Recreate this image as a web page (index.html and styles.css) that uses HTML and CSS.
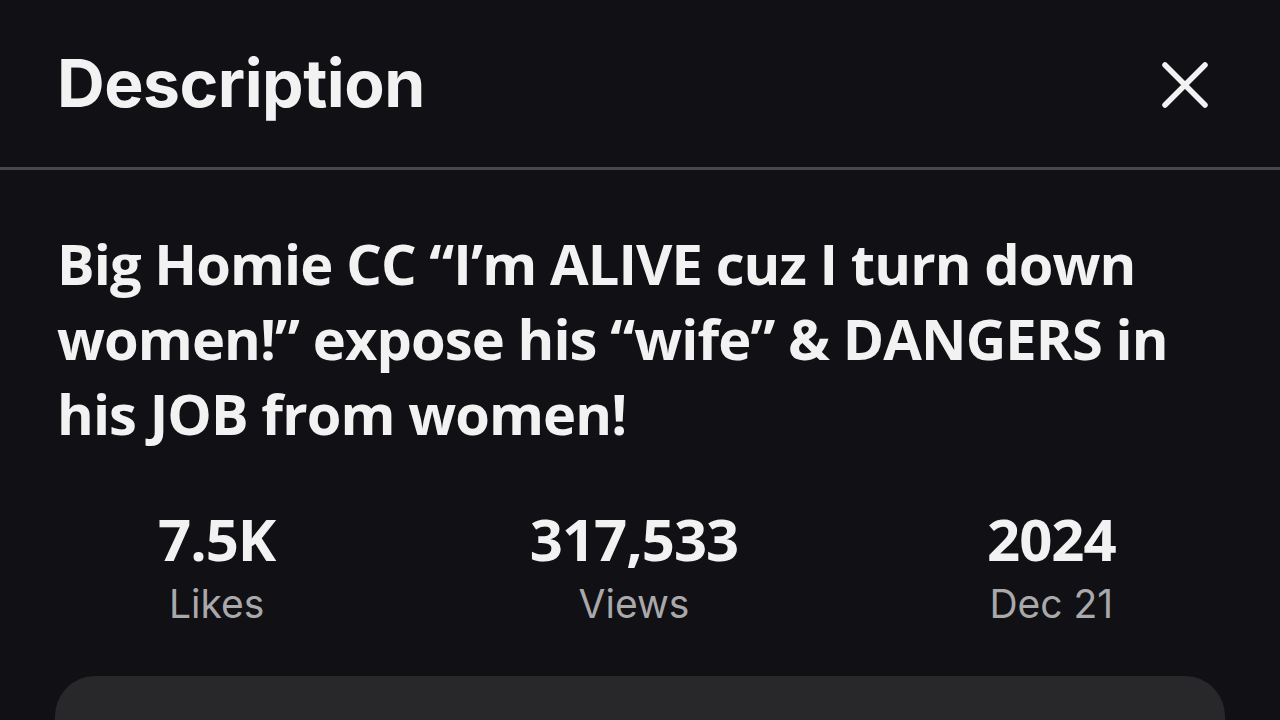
FILE: index.html
```html
<!DOCTYPE html>
<html lang="en">
<head>
    <meta charset="UTF-8">
    <meta name="viewport" content="width=device-width, initial-scale=1.0">
    <title>Description</title>
    <link rel="stylesheet" href="styles.css">
</head>
<body>

<header class="sheet-header">
    <h1>Description</h1>
    <button class="close-button" aria-label="Close">
        <svg width="50" height="50" viewBox="0 0 50 50">
            <path d="M5 5 L45 45 M45 5 L5 45" stroke="#f2f2f2" stroke-width="5.5" stroke-linecap="round" fill="none"/>
        </svg>
    </button>
</header>

<div class="content">
    <p class="video-title">Big Homie CC “I’m ALIVE cuz I turn down women!” expose his “wife” &amp; DANGERS in his JOB from women!</p>

    <div class="stats">
        <div class="stat">
            <span class="stat-value">7.5K</span>
            <span class="stat-label">Likes</span>
        </div>
        <div class="stat">
            <span class="stat-value">317,533</span>
            <span class="stat-label">Views</span>
        </div>
        <div class="stat">
            <span class="stat-value">2024</span>
            <span class="stat-label">Dec 21</span>
        </div>
    </div>

    <!-- Cartão seguinte, cortado pela borda da tela -->
    <div class="info-card"></div>
</div>

</body>
</html>
```

FILE: styles.css
```css
body {
    font-family: Inter, "Noto Sans", sans-serif;
    background-color: #111014;
    color: #f2f2f2;
    margin: 0;
    padding: 0;
    height: 720px;
    overflow: hidden;
}

.sheet-header {
    display: flex;
    justify-content: space-between;
    align-items: center;
    height: 170px;
    padding: 0 56px 0 57px;
    border-bottom: 3px solid #48474a;
    box-sizing: border-box;
}

.sheet-header h1 {
    font-size: 66px;
    font-weight: 700;
    margin: 0 0 2px;
    letter-spacing: -0.5px;
}

.close-button {
    background: none;
    border: none;
    padding: 0;
    margin: 3px 14px 0 0;
    cursor: pointer;
    display: flex;
}

.content {
    padding: 0 56px;
}

.video-title {
    font-family: "Open Sans", sans-serif;
    font-size: 56px;
    font-weight: 700;
    line-height: 75px;
    letter-spacing: -0.9px;
    margin: 56px 0 0;
    padding-left: 1px;
}

.stats {
    display: grid;
    grid-template-columns: repeat(3, 1fr);
    margin: 48px -36px 0 -48px;
}

.stat {
    display: flex;
    flex-direction: column;
    align-items: center;
}

.stat-value {
    font-family: "Open Sans", sans-serif;
    font-size: 58px;
    font-weight: 700;
    line-height: 80px;
    letter-spacing: -1px;
}

.stat-label {
    font-size: 39px;
    color: #a9a9ab;
    line-height: 48px;
    margin-top: 1px;
}

.info-card {
    margin: 48px -1px 0;
    height: 44px;
    background-color: #28272a;
    border-radius: 40px 40px 0 0;
}
```
